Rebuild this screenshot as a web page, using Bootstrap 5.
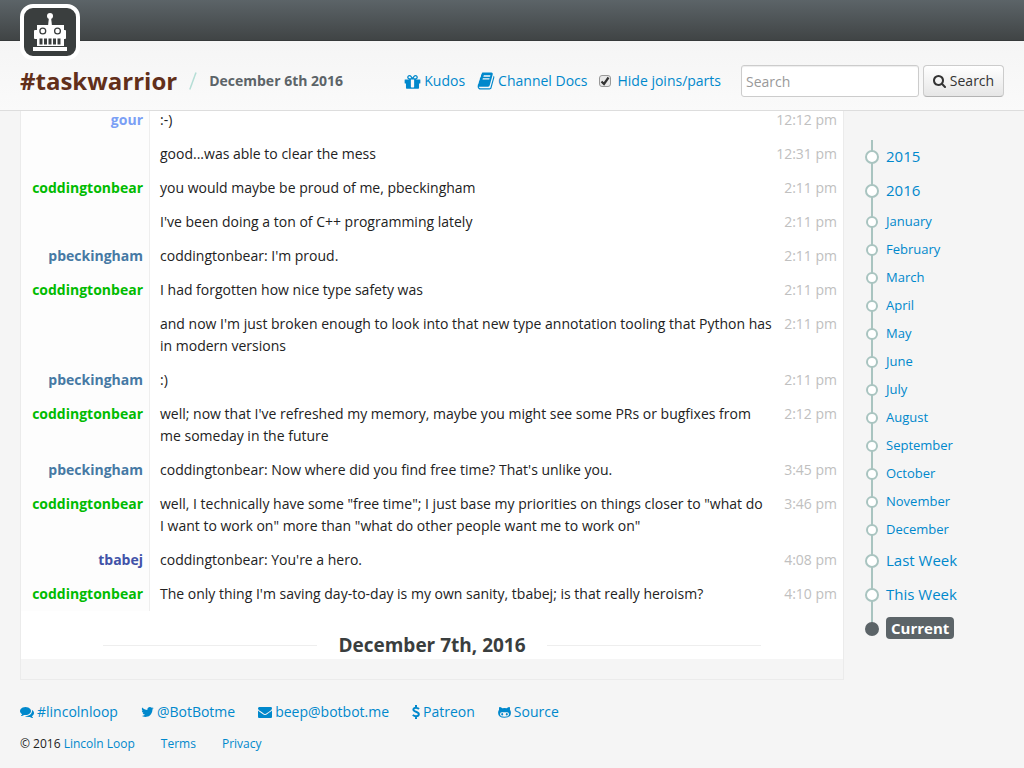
<!DOCTYPE html>
<html lang="en">
<head>
<meta charset="utf-8">
<meta name="viewport" content="width=device-width, initial-scale=1">
<title>#taskwarrior | BotBot.me</title>
<link href="https://cdn.jsdelivr.net/npm/bootstrap@5.3.0/dist/css/bootstrap.min.css" rel="stylesheet">
<style>
  body { font-family: "Open Sans", "Noto Sans", sans-serif; font-size: 14px; line-height: 22px; color: #222; background: #f5f5f5; }
  a { color: #0088cc; text-decoration: none; }
  a:hover { text-decoration: underline; }
  .ico { fill: currentColor; flex: none; }
  .site-header { z-index: 10; }
  .top-strip { height: 41px; background: linear-gradient(#5c6468, #404445); border-bottom: 1px solid #36393a; }
  .logo { left: 20px; top: 4px; width: 60px; height: 56px; background: #3a3e3e; border: 4px solid #fff; border-radius: 13px; }
  .channel-bar { padding: 24px 20px 13px; background: linear-gradient(#f5f5f5, #fafafa); border-bottom: 1px solid #ddd; }
  .channel-name { font-size: 24px; line-height: 32px; color: #622f1a; }
  .slash { width: 8px; height: 18px; margin: 0 12px; }
  .day { color: #5c6468; }
  .tools { gap: 12px; }
  .tools a { gap: 3px; }
  .tools form { margin-left: 8px; }
  .search-box { width: 178px; height: 32px; padding: 4px; font-size: 14px; line-height: 20px; border: 1px solid #ccc; border-radius: 3px; box-shadow: inset 0 1px 1px rgba(0,0,0,.075); }
  .search-box::placeholder { color: #999; }
  .search-btn { height: 32px; width: 81px; padding: 0; font-size: 14px; color: #333; border: 1px solid #ccc; border-bottom-color: #b3b3b3; border-radius: 4px; background: linear-gradient(#fff, #e6e6e6); }
  .hide-joins { gap: 6px; }
  .tick.form-check-input { width: 12px; height: 12px; margin: 0; border: 1px solid #999; border-radius: 3px; background-color: #e8e8e8; }
  .tick.form-check-input:checked { background-color: #e8e8e8; border-color: #999; background-size: 12px; background-image: url("data:image/svg+xml,%3csvg xmlns='http://www.w3.org/2000/svg' viewBox='0 0 12 12'%3e%3cpath d='M2.500 6.500l2.500 2.500 4.500-6.500' fill='none' stroke='%23333' stroke-width='2.200'/%3e%3c/svg%3e"); }
  .page-body { margin-top: -9px; padding: 0 20px; gap: 20px; }
  .log { min-width: 0; border: 1px solid #ebebeb; padding-bottom: 20px; }
  .log-day { background: #fff; }
  .log th { flex: none; width: 129px; padding: 6px; text-align: right; background: #fdfdfd; border-right: 1px solid #eee; }
  .log .said { flex: 1; min-width: 0; padding: 6px 0 6px 10px; }
  .log .when { padding: 6px 6px 6px 0; white-space: nowrap; color: #c0c0c0; }
  .gour { color: #7a9ff5; } .codd { color: #0b0; } .pbeck { color: #4679a4; } .tbabej { color: #4152a8; }
  .day-title { padding: 20px 10% 0; gap: 21px; }
  .day-title::before, .day-title::after { content: ""; flex: 1; height: 1px; background: #eee; }
  .day-title h2 { font-size: 19px; line-height: 28px; color: #3a3e3e; }
  .timeline { width: 140px; margin-top: 38px; }
  .timeline li { position: relative; height: 34px; padding-left: 22px; font-size: 15px; line-height: 32px; }
  .timeline li::before { content: ""; position: absolute; left: 7px; top: 0; bottom: 0; width: 2px; background: #a9c4c0; }
  .timeline li:last-child::before { bottom: 17px; }
  .timeline li::after { content: ""; position: absolute; left: 1px; top: 10px; width: 14px; height: 14px; border: 2px solid #a9c4c0; border-radius: 50%; background: #fff; }
  .timeline .month { height: 28px; font-size: 13px; line-height: 27px; }
  .timeline .month::after { left: 2px; top: 8px; width: 12px; height: 12px; }
  .timeline .now::after { background: #5c6468; border-color: #5c6468; }
  .timeline .now a { display: inline-block; padding: 0 5px; line-height: 22px; color: #fff; background: #5c6468; border-radius: 4px; }
  .foot { padding: 21px 20px 13px; }
  .foot-links { gap: 23px; margin-bottom: 10px; }
  .foot-links a { gap: 3px; }
  .foot-small { font-size: 12px; gap: 26px; }
</style>
</head>
<body>
<header class="site-header sticky-top">
  <div class="top-strip"></div>
  <a class="logo position-absolute d-block" href="#" aria-label="BotBot.me home">
    <svg class="d-block" width="52" height="48" viewBox="0 0 52 48" fill="#fff">
      <circle cx="26" cy="8" r="3"/><path d="M25 9h2l1 9h-4z"/>
      <path d="M13 17h27v21H13z"/><rect x="10" y="22" width="4" height="9" rx="1"/><rect x="39" y="22" width="3" height="9" rx="1"/>
      <path d="M9 39h34v4H9z"/>
      <g fill="none" stroke="#3a3e3e" stroke-width="1.300"><circle cx="18.800" cy="23" r="2.900"/><circle cx="33.500" cy="23" r="2.900"/></g>
      <path fill="#3a3e3e" d="M15.500 30.500h3v6h-3zM20 30.500h3v6h-3zM24.500 30.500h3v6h-3zM29 30.500h3v6h-3zM33.500 30.500h3v6h-3z"/>
    </svg>
  </a>
  <div class="channel-bar d-flex flex-wrap align-items-center">
    <h1 class="channel-name fw-bold m-0">#taskwarrior</h1>
    <svg class="slash" viewBox="0 0 8 18" aria-hidden="true"><path d="M.8 17.500L7 .5" stroke="#b5ded6" stroke-width="1.500"/></svg>
    <strong class="day">December 6th 2016</strong>
    <div class="tools d-flex align-items-center ms-auto">
      <a class="d-flex align-items-center" href="#"><svg class="ico" width="17" height="17" viewBox="64 0 1664 1664"><path d="M1056 1356v-716h-320v716q0 25 18 38.500t46 13.500h192q28 0 46-13.500t18-38.500zm-456-844h195l-126-161q-26-31-69-31-40 0-68 28t-28 68 28 68 68 28zm688-96q0-40-28-68t-68-28q-43 0-69 31l-125 161h194q40 0 68-28t28-68zm376 256v320q0 14-9 23t-23 9h-96v416q0 40-28 68t-68 28h-1088q-40 0-68-28t-28-68v-416h-96q-14 0-23-9t-9-23v-320q0-14 9-23t23-9h440q-93 0-158.500-65.500t-65.500-158.500 65.500-158.500 158.500-65.500q107 0 168 77l128 165 128-165q61-77 168-77 93 0 158.500 65.500t65.500 158.500-65.500 158.500-158.500 65.500h440q14 0 23 9t9 23z"/></svg>Kudos</a>
      <a class="d-flex align-items-center" href="#"><svg class="ico" width="18" height="20" viewBox="0 0 1792 1792" preserveAspectRatio="none"><path d="M1703 478q40 57 18 129l-275 906q-19 64-76.500 107.500t-122.500 43.500h-923q-77 0-148.500-53.500t-99.500-131.500q-24-67-2-127 0-4 3-27t4-37q1-8-3-21.500t-3-19.500q2-11 8-21t16.500-23.500 16.500-23.500q23-38 45-91.500t30-91.500q3-10 .5-30t-.5-28q3-11 17-28t17-23q21-36 42-92t25-90q1-9-2.500-32t.5-28q4-13 22-30.500t22-22.500q19-26 42.500-84.500t27.500-96.500q1-8-3-25.500t-2-26.500q2-8 9-18t18-23 17-21q8-12 16.500-30.500t15-35 16-36 19.500-32 26.500-23.500 36-11.500 47.500 5.500l-1 3q38-9 51-9h761q74 0 114 56t18 130l-274 906q-36 119-71.500 153.500t-128.500 34.500h-869q-27 0-38 15-11 16-1 43 24 70 144 70h923q29 0 56-15.500t35-41.500l300-987q7-22 5-57 38 15 59 43zm-1064 2q-4 13 2 22.500t20 9.500h608q13 0 25.500-9.500t16.500-22.500l21-64q4-13-2-22.500t-20-9.500h-608q-13 0-25.500 9.500t-16.500 22.500zm-83 256q-4 13 2 22.500t20 9.500h608q13 0 25.500-9.500t16.500-22.500l21-64q4-13-2-22.500t-20-9.500h-608q-13 0-25.500 9.500t-16.500 22.500z"/></svg>Channel Docs</a>
      <div class="hide-joins d-flex align-items-center">
        <input class="tick form-check-input" type="checkbox" id="hide" checked>
        <label for="hide"><a href="#">Hide joins/parts</a></label>
      </div>
      <form class="d-flex gap-1" role="search">
        <input class="search-box" type="search" placeholder="Search" aria-label="Search">
        <button class="search-btn d-flex align-items-center justify-content-center gap-1" type="submit"><svg class="ico" width="13" height="13" viewBox="64 128 1664 1664"><path d="M1216 832q0-185-131.500-316.500t-316.500-131.500-316.500 131.500-131.500 316.500 131.500 316.500 316.500 131.500 316.500-131.500 131.500-316.500zm512 832q0 52-38 90t-90 38q-54 0-90-38l-343-342q-179 124-399 124-143 0-273.500-55.500t-225-150-150-225-55.500-273.500 55.500-273.500 150-225 225-150 273.500-55.500 273.500 55.500 225 150 150 225 55.500 273.500q0 220-124 399l343 343q37 37 37 90z"/></svg>Search</button>
      </form>
    </div>
  </div>
</header>

<div class="page-body d-flex">
  <main class="log flex-grow-1 align-self-start">
    <div class="log-day">
      <table class="d-block">
        <tbody class="d-block">
        <tr class="d-flex"><th scope="row" class="gour">gour</th><td class="said">:-)</td><td class="when"><time>12:12 pm</time></td></tr>
        <tr class="d-flex"><th></th><td class="said">good...was able to clear the mess</td><td class="when"><time>12:31 pm</time></td></tr>
        <tr class="d-flex"><th scope="row" class="codd">coddingtonbear</th><td class="said">you would maybe be proud of me, pbeckingham</td><td class="when"><time>2:11 pm</time></td></tr>
        <tr class="d-flex"><th></th><td class="said">I've been doing a ton of C++ programming lately</td><td class="when"><time>2:11 pm</time></td></tr>
        <tr class="d-flex"><th scope="row" class="pbeck">pbeckingham</th><td class="said">coddingtonbear: I'm proud.</td><td class="when"><time>2:11 pm</time></td></tr>
        <tr class="d-flex"><th scope="row" class="codd">coddingtonbear</th><td class="said">I had forgotten how nice type safety was</td><td class="when"><time>2:11 pm</time></td></tr>
        <tr class="d-flex"><th></th><td class="said">and now I'm just broken enough to look into that new type annotation tooling that Python has in&nbsp;modern versions</td><td class="when"><time>2:11 pm</time></td></tr>
        <tr class="d-flex"><th scope="row" class="pbeck">pbeckingham</th><td class="said">:)</td><td class="when"><time>2:11 pm</time></td></tr>
        <tr class="d-flex"><th scope="row" class="codd">coddingtonbear</th><td class="said">well; now that I've refreshed my memory, maybe you might see some PRs or bugfixes from me&nbsp;someday in the future</td><td class="when"><time>2:12 pm</time></td></tr>
        <tr class="d-flex"><th scope="row" class="pbeck">pbeckingham</th><td class="said">coddingtonbear: Now where did you find free time? That's unlike you.</td><td class="when"><time>3:45 pm</time></td></tr>
        <tr class="d-flex"><th scope="row" class="codd">coddingtonbear</th><td class="said">well, I technically have some "free time"; I just base my priorities on things closer to "what do I&nbsp;want to work on" more than "what do other people want me to work on"</td><td class="when"><time>3:46 pm</time></td></tr>
        <tr class="d-flex"><th scope="row" class="tbabej">tbabej</th><td class="said">coddingtonbear: You're a hero.</td><td class="when"><time>4:08 pm</time></td></tr>
        <tr class="d-flex"><th scope="row" class="codd">coddingtonbear</th><td class="said">The only thing I'm saving day-to-day is my own sanity, tbabej; is that really heroism?</td><td class="when"><time>4:10 pm</time></td></tr>
        </tbody>
      </table>
      <div class="day-title d-flex align-items-center"><h2 class="fw-bold m-0">December 7th, 2016</h2></div>
    </div>
  </main>
  <nav class="timeline flex-shrink-0" aria-label="Timeline">
    <ul class="list-unstyled m-0">
      <li><a href="#">2015</a></li>
      <li><a href="#">2016</a></li>
      <li class="month"><a href="#">January</a></li>
      <li class="month"><a href="#">February</a></li>
      <li class="month"><a href="#">March</a></li>
      <li class="month"><a href="#">April</a></li>
      <li class="month"><a href="#">May</a></li>
      <li class="month"><a href="#">June</a></li>
      <li class="month"><a href="#">July</a></li>
      <li class="month"><a href="#">August</a></li>
      <li class="month"><a href="#">September</a></li>
      <li class="month"><a href="#">October</a></li>
      <li class="month"><a href="#">November</a></li>
      <li class="month"><a href="#">December</a></li>
      <li><a href="#">Last Week</a></li>
      <li><a href="#">This Week</a></li>
      <li class="now"><a class="fw-bold" href="#">Current</a></li>
    </ul>
  </nav>
</div>

<footer class="foot">
  <div class="foot-links d-flex flex-wrap">
    <a class="d-flex align-items-center" href="#"><svg class="ico" width="14" height="14" viewBox="0 0 1792 1792"><path d="M1408 768q0 139-94 257t-256.500 186.500-353.500 68.500q-86 0-176-16-124 88-278 128-36 9-86 16h-3q-11 0-20.500-8t-11.500-21q-1-3-1-6.500t.5-6.500 2-6l2.500-5 3.500-5.500 4-5 4.500-5 4-4.500q5-6 23-25t26-29.500 22.500-29 25-38.500 20.500-44q-124-72-195-177t-71-224q0-139 94-257t256.500-186.500 353.500-68.500 353.500 68.500 256.500 186.500 94 257zm384 256q0 120-71 224.500t-195 176.500q10 24 20.500 44t25 38.500 22.500 29 26 29.500 23 25q1 1 4 4.500t4.500 5 4 5 3.500 5.500l2.500 5 2 6 .5 6.500-1 6.500q-3 14-13 22t-22 7q-50-7-86-16-154-40-278-128-90 16-176 16-271 0-472-132 58 4 88 4 161 0 309-45t264-129q125-92 192-212t67-254q0-77-23-152 129 71 204 178t75 230z"/></svg>#lincolnloop</a>
    <a class="d-flex align-items-center" href="#"><svg class="ico" width="13" height="14" viewBox="64 0 1664 1792"><path d="M1684 408q-67 98-162 167 1 14 1 42 0 130-38 259.500t-115.500 248.500-184.500 210.500-258 146-323 54.500q-271 0-496-145 35 4 78 4 225 0 401-138-105-2-188-64.500t-114-159.500q33 5 61 5 43 0 85-11-112-23-185.500-111.500t-73.500-205.500v-4q68 38 146 41-66-44-105-115t-39-154q0-88 44-163 121 149 294.500 238.500t371.500 99.500q-8-38-8-74 0-134 94.500-228.500t228.500-94.500q140 0 236 102 109-21 205-78-37 115-142 178 93-10 186-50z"/></svg>@BotBotme</a>
    <a class="d-flex align-items-center" href="#"><svg class="ico" width="14" height="14" viewBox="0 0 1792 1792"><path d="M1792 710v794q0 66-47 113t-113 47h-1472q-66 0-113-47t-47-113v-794q44 49 101 87 362 246 497 345 57 42 92.500 65.500t94.500 48 110 24.500h2q51 0 110-24.500t94.500-48 92.500-65.500q170-123 498-345 57-39 100-87zm0-294q0 79-49 151t-122 123q-376 261-468 325-10 7-42.500 30.500t-54 38-52 32.500-57.500 27-50 9h-2q-23 0-50-9t-57.500-27-52-32.500-54-38-42.500-30.500q-91-64-262-182.500t-205-142.500q-62-42-117-115.500t-55-136.500q0-78 41.500-130t118.500-52h1472q65 0 112.500 47t47.500 113z"/></svg>beep@botbot.me</a>
    <a class="d-flex align-items-center" href="#"><svg class="ico" width="8" height="14" viewBox="0 0 8 14"><path d="M4 0v2.500M4 11.500V14M7 4C6 3 5 2.700 4 2.700 2.400 2.700 1.400 3.400 1.400 4.600 1.400 7.400 6.800 6.200 6.800 9.300 6.800 10.600 5.600 11.300 4 11.300 2.800 11.300 1.800 10.900.8 9.900" fill="none" stroke="currentColor" stroke-width="2"/></svg>Patreon</a>
    <a class="d-flex align-items-center" href="#"><svg class="ico" width="13" height="14" viewBox="0 0 13 14"><path fill-rule="evenodd" d="M1.300 2Q3 2 4.300 3.200Q6.500 2.800 8.700 3.200Q10 2 11.700 2Q12.200 3.500 11.900 4.700Q13 6 12.900 8Q12.800 12.800 6.500 12.800T.1 8Q0 6 1.100 4.700Q.8 3.500 1.300 2zM3.800 7.200Q2 7.400 2 9.300Q2.100 11.800 6.500 11.800T11 9.300Q11 7.400 9.200 7.200Q6.500 7.500 3.800 7.200z"/><ellipse cx="4.200" cy="9.300" rx=".9" ry="1.300"/><ellipse cx="8.800" cy="9.300" rx=".9" ry="1.300"/></svg>Source</a>
  </div>
  <div class="foot-small d-flex flex-wrap">
    <span>© 2016 <a href="#">Lincoln Loop</a></span>
    <a href="#">Terms</a>
    <a href="#">Privacy</a>
  </div>
</footer>
<script src="https://cdn.jsdelivr.net/npm/bootstrap@5.3.0/dist/js/bootstrap.bundle.min.js"></script>
</body>
</html>
